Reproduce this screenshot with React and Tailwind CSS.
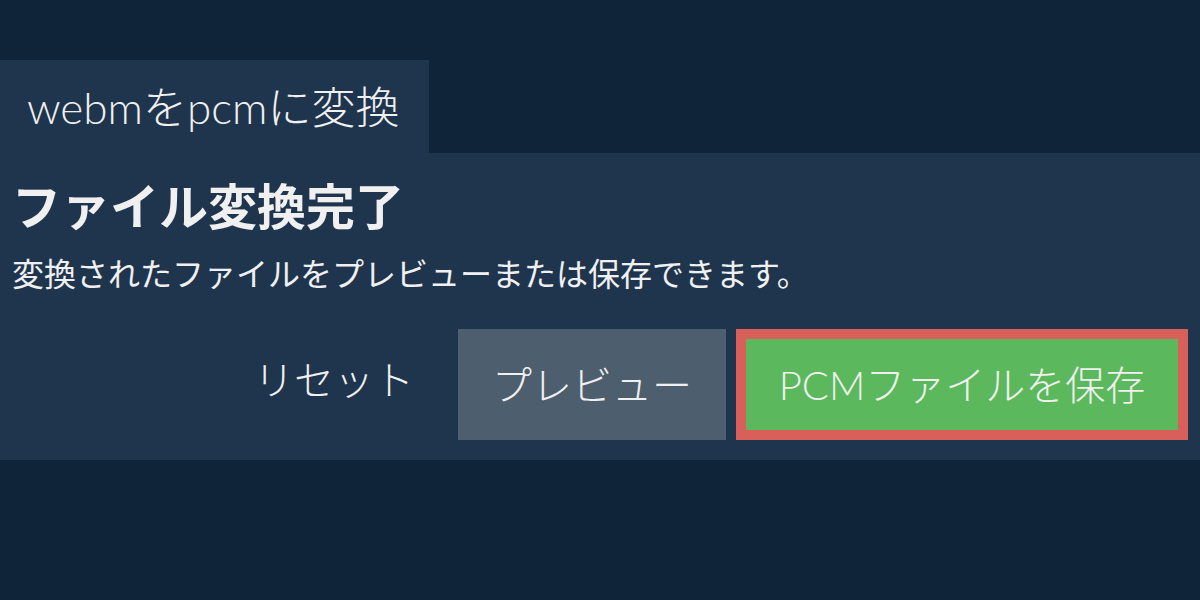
export default function App() {
  const font = { fontFamily: '"Lato", "Noto Sans CJK JP", sans-serif' };
  return (
    <div className="min-h-screen w-full bg-[#0f2339] pt-[60px] text-[#f0f0f0]" style={font}>
      <div className="flex">
        <div className="h-[93px] w-[429px] bg-[#1f354d] px-[27px] flex items-center text-[44px] font-light leading-none whitespace-nowrap">
          webmをpcmに変換
        </div>
      </div>
      <div className="bg-[#1f354d] px-[12px] pt-[17px] pb-[20px]">
        <h1 className="text-[49px] font-bold leading-[72px] whitespace-nowrap">ファイル変換完了</h1>
        <p className="mt-[8px] text-[32px] leading-[48px] whitespace-nowrap">変換されたファイルをプレビューまたは保存できます。</p>
        <div className="mt-[31px] flex justify-end items-center gap-[10px]">
          <button className="h-[111px] px-[34px] pb-[10px] text-[40px] font-light text-[#f0f0f0] whitespace-nowrap">リセット</button>
          <button className="h-[111px] w-[268px] bg-[#4d5e6e] text-[40px] font-light text-[#f0f0f0] whitespace-nowrap">プレビュー</button>
          <button className="h-[111px] w-[452px] border-[10px] border-[#d9605a] bg-[#5cb85c] text-[40px] font-light text-[#f0f0f0] whitespace-nowrap">PCMファイルを保存</button>
        </div>
      </div>
    </div>
  );
}
